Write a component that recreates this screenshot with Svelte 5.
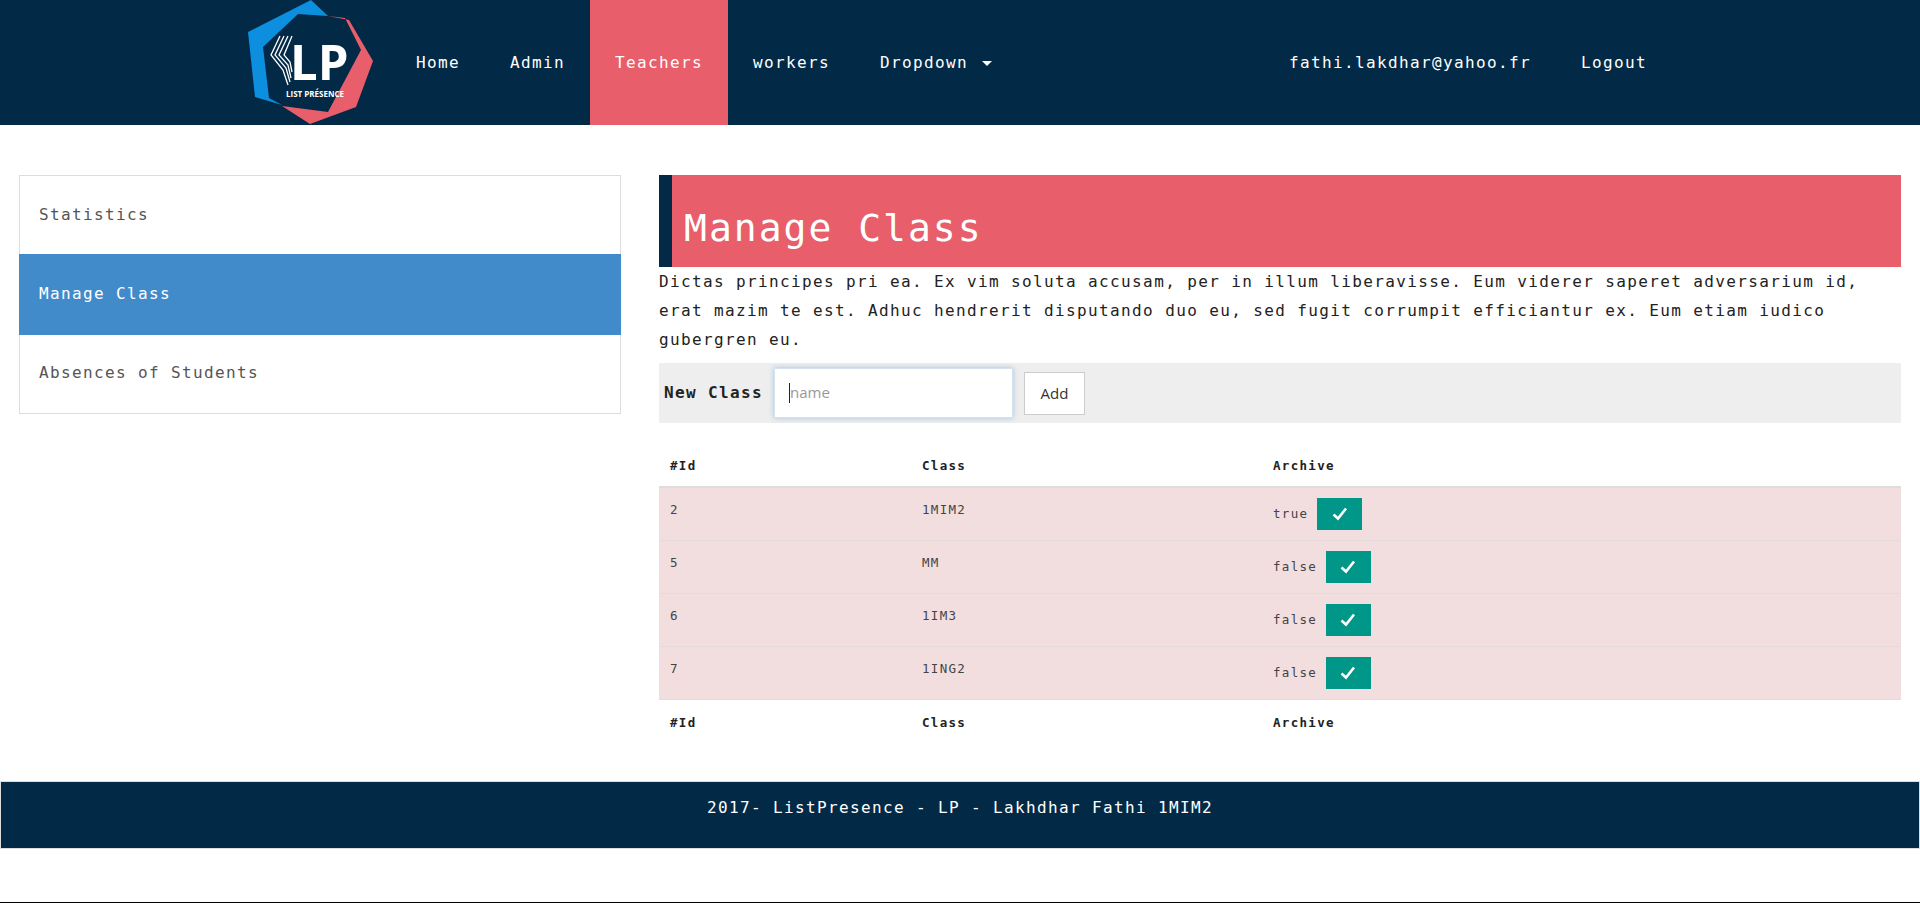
<script>
  const links = [
    { label: 'Home' },
    { label: 'Admin' },
    { label: 'Teachers', active: true },
    { label: 'workers' }
  ];
  const side = [
    { label: 'Statistics' },
    { label: 'Manage Class', active: true },
    { label: 'Absences of Students' }
  ];
  const classes = [
    { id: 2, name: '1MIM2', archive: 'true' },
    { id: 5, name: 'MM', archive: 'false' },
    { id: 6, name: '1IM3', archive: 'false' },
    { id: 7, name: '1ING2', archive: 'false' }
  ];
</script>

<div class="page">
  <header>
    <a class="brand" href="#home" aria-label="List Presence">
      <svg width="150" height="125" viewBox="0 0 150 125">
        <polygon fill="#0d8fe0" points="18,32 81,0 98,16 68,14 33,47 39,98 52,105 25,97" />
        <polygon fill="#e85e6b" points="98,16 119,20 143,61 126,107 80,124 52,106 98,112 131,50 115,18" />
        <g fill="none" stroke="#fff" stroke-width="1.3">
          <path d="M50 36 L41 55 L53 70 L58 85" />
          <path d="M54 36 L45 55 L56 68 L60 82" />
          <path d="M58 36 L49 55 L58 65 L61 78" />
          <path d="M62 36 L54 55 L60 62 L62 72" />
        </g>
        <text x="60" y="80" class="lp">LP</text>
        <text x="56" y="97" class="tag">LIST PRÉSENCE</text>
      </svg>
    </a>
    <ul class="nav">
      {#each links as link}
        <li><a href="#x" class:active={link.active}>{link.label}</a></li>
      {/each}
      <li><a href="#x">Dropdown <span class="caret"></span></a></li>
    </ul>
    <ul class="nav right">
      <li><a href="#x">fathi.lakdhar@yahoo.fr</a></li>
      <li><a href="#x">Logout</a></li>
    </ul>
  </header>

  <main>
    <aside>
      {#each side as item}
        <a href="#x" class:active={item.active}>{item.label}</a>
      {/each}
    </aside>
    <section>
      <h1>Manage Class</h1>
      <p>Dictas principes pri ea. Ex vim soluta accusam, per in illum liberavisse. Eum viderer saperet adversarium id, erat mazim te est. Adhuc hendrerit disputando duo eu, sed fugit corrumpit efficiantur ex. Eum etiam iudico gubergren eu.</p>
      <form>
        <label for="name">New Class</label>
        <span class="field">
          <input id="name" placeholder="name" />
          <span class="cursor"></span>
        </span>
        <button type="button">Add</button>
      </form>
      <table>
        <thead>
          <tr><th class="c1">#Id</th><th class="c2">Class</th><th>Archive</th></tr>
        </thead>
        <tbody>
          {#each classes as row}
            <tr>
              <td>{row.id}</td>
              <td>{row.name}</td>
              <td class="arch">
                <span>{row.archive}</span>
                <button type="button" class="ok" aria-label="toggle">
                  <svg width="16" height="14" viewBox="0 0 16 14">
                    <path d="M1.5 7.5 L6 11.5 L14 1.5" fill="none" stroke="#fff" stroke-width="2.6" />
                  </svg>
                </button>
              </td>
            </tr>
          {/each}
        </tbody>
        <tfoot>
          <tr><th>#Id</th><th>Class</th><th>Archive</th></tr>
        </tfoot>
      </table>
    </section>
  </main>

  <footer>2017- ListPresence - LP - Lakhdhar Fathi 1MIM2</footer>
</div>

<style>
  :global(body) {
    margin: 0;
    background: #fff;
  }

  .page {
    height: 903px;
    box-sizing: border-box;
    border-bottom: 1px solid #000;
    overflow: hidden;
    font-family: "DejaVu Sans Mono", monospace;
    font-size: 16px;
    letter-spacing: 1.37px;
    color: #333;
  }

  header {
    height: 125px;
    background: #022a47;
    display: flex;
    padding: 0 248px 0 230px;
  }

  .brand {
    width: 161px;
    display: block;
  }

  .brand svg {
    display: block;
  }

  .lp {
    font-family: "Open Sans", sans-serif;
    font-weight: 700;
    font-size: 49px;
    letter-spacing: 0;
    fill: #fff;
  }

  .tag {
    font-family: "Open Sans", sans-serif;
    font-weight: 700;
    font-size: 8px;
    letter-spacing: 0;
    fill: #fff;
  }

  .nav {
    list-style: none;
    display: flex;
    margin: 0;
    padding: 0;
  }

  .nav.right {
    margin-left: auto;
  }

  .nav a {
    display: block;
    padding: 0 25px;
    line-height: 125px;
    color: #fff;
    text-decoration: none;
  }

  .nav a.active {
    background: #e85e6b;
  }

  .caret {
    display: inline-block;
    width: 0;
    height: 0;
    margin-left: 3px;
    vertical-align: middle;
    border-top: 5px solid #fff;
    border-left: 5px solid transparent;
    border-right: 5px solid transparent;
  }

  main {
    display: grid;
    grid-template-columns: 602px 1242px;
    column-gap: 38px;
    padding: 50px 19px 0;
  }

  aside {
    align-self: start;
    display: flex;
    flex-direction: column;
    border: 1px solid #ddd;
    height: 239px;
    box-sizing: border-box;
  }

  aside a {
    height: 79px;
    display: flex;
    align-items: center;
    padding: 0 0 2px 19px;
    box-sizing: border-box;
    color: #555;
    text-decoration: none;
  }

  aside a.active {
    margin: 0 -1px;
    padding-left: 20px;
    height: 81px;
    background: #428bca;
    color: #fff;
  }

  h1 {
    margin: 0;
    height: 92px;
    box-sizing: border-box;
    border-left: 13px solid #022a47;
    background: #e85e6b;
    color: #fff;
    font-size: 38px;
    font-weight: 400;
    letter-spacing: 2px;
    line-height: 46px;
    padding: 30px 0 0 12px;
  }

  p {
    margin: 0 0 9px;
    line-height: 29px;
    color: #222;
  }

  form {
    height: 60px;
    background: #eee;
    display: flex;
    align-items: center;
    padding-left: 5px;
  }

  label {
    font-weight: 700;
    color: #222;
    margin-right: 11px;
    margin-top: -2px;
  }

  .field {
    position: relative;
    display: block;
    margin-right: 11px;
  }

  input {
    display: block;
    width: 239px;
    height: 50px;
    box-sizing: border-box;
    border: 1px solid #d5e3f0;
    background: #fff;
    padding: 0 15px 2px;
    font-family: "Open Sans", sans-serif;
    font-size: 15px;
    box-shadow: 0 0 5px rgba(102, 155, 210, 0.55);
    outline: none;
  }

  input::placeholder {
    color: #999;
  }

  .cursor {
    position: absolute;
    left: 15px;
    top: 15px;
    width: 1px;
    height: 20px;
    background: #222;
  }

  form button {
    width: 61px;
    height: 43px;
    border: 1px solid #ccc;
    background: #fff;
    color: #333;
    font-family: "Open Sans", sans-serif;
    font-size: 15px;
    padding: 0;
  }

  table {
    width: 100%;
    margin-top: 19px;
    border-collapse: collapse;
    font-size: 12.5px;
    letter-spacing: 1.3px;
  }

  th {
    text-align: left;
    height: 45px;
    padding: 2px 11px 0;
    box-sizing: border-box;
    color: #222;
    font-weight: 700;
  }

  .c1 {
    width: 252px;
  }

  .c2 {
    width: 351px;
  }

  thead th {
    border-bottom: 2px solid #ddd;
  }

  td {
    height: 53px;
    box-sizing: border-box;
    padding: 14px 11px 0;
    vertical-align: top;
    background: #f2dede;
    border-bottom: 1px solid #e6dada;
    color: #444;
  }

  td.arch {
    padding-top: 10px;
  }

  .ok {
    width: 45px;
    height: 32px;
    border: 0;
    padding: 0;
    background: #009688;
    vertical-align: middle;
    display: inline-flex;
    align-items: center;
    justify-content: center;
  }

  footer {
    margin-top: 37px;
    height: 68px;
    box-sizing: border-box;
    border: 1px solid #ddd;
    background: #022a47;
    color: #fff;
    text-align: center;
    padding-top: 14px;
    line-height: 24px;
  }
</style>
